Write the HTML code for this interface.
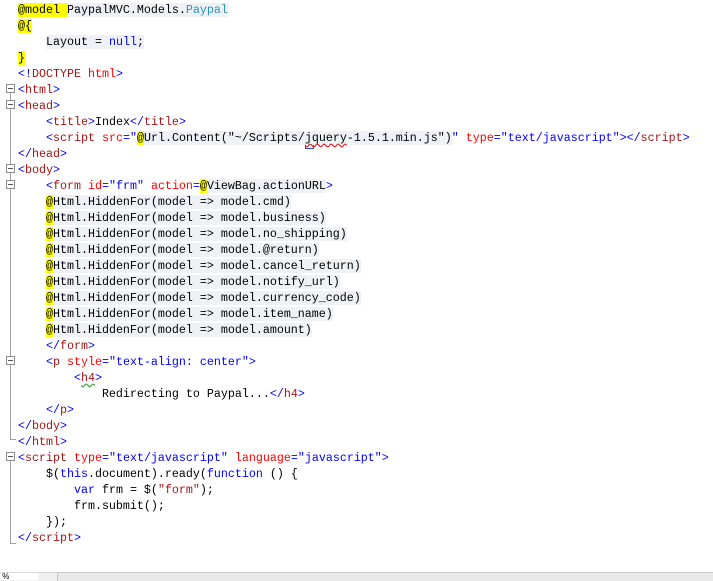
<!DOCTYPE html>
<html><head><style>
body{margin:0;width:713px;height:580px;background:#fff;overflow:hidden;position:relative;font-family:"Liberation Mono",monospace;font-size:11.67px}
.l{position:absolute;left:18px;height:16px;line-height:16px;white-space:pre;color:#000}
.t{color:#0000ff}.n{color:#a31515}.a{color:#ff0000}.v{color:#0000ff}.k{color:#0000ff}.c{color:#2b91af}
.y{background:#ffff00}.g{background:#eef2f7}
.box{position:absolute;left:6px;width:7px;height:7px;border:1px solid #8c8c8c;background:#fff}
.box:after{content:"";position:absolute;left:1px;top:3px;width:5px;height:1px;background:#555}
.vl{position:absolute;left:10px;width:1px;background:#a0a0a0}
.sq{text-decoration:underline wavy #e02020;text-underline-offset:2px}
.sqg{text-decoration:underline wavy #40a040;text-underline-offset:2px}
</style></head><body>
<div class="vl" style="top:90px;height:350px"></div>
<div class="vl" style="top:458px;height:86px"></div>
<div style="position:absolute;left:10px;top:543px;width:6px;height:1px;background:#a0a0a0"></div>
<div style="position:absolute;left:10px;top:439px;width:6px;height:1px;background:#a0a0a0"></div>
<div class="box" style="top:84px"></div>
<div class="box" style="top:100px"></div>
<div class="box" style="top:164px"></div>
<div class="box" style="top:180px"></div>
<div class="box" style="top:356px"></div>
<div class="box" style="top:452px"></div>

<div class="l" style="top:2px"><span class="y">@model </span><span class="g">PaypalMVC.Models.<span class="c">Paypal</span></span></div>
<div class="l" style="top:18px"><span class="y">@{</span></div>
<div class="l" style="top:34px">    <span class="g">Layout = <span class="k">null</span>;</span></div>
<div class="l" style="top:50px"><span class="y">}</span></div>
<div class="l" style="top:66px"><span class="t">&lt;!</span><span class="n">DOCTYPE</span> <span class="a">html</span><span class="t">&gt;</span></div>
<div class="l" style="top:82px"><span class="t">&lt;</span><span class="n">html</span><span class="t">&gt;</span></div>
<div class="l" style="top:98px"><span class="t">&lt;</span><span class="n">head</span><span class="t">&gt;</span></div>
<div class="l" style="top:114px">    <span class="t">&lt;</span><span class="n">title</span><span class="t">&gt;</span>Index<span class="t">&lt;/</span><span class="n">title</span><span class="t">&gt;</span></div>
<div class="l" style="top:130px">    <span class="t">&lt;</span><span class="n">script</span> <span class="a">src</span><span class="t">="</span><span class="y">@</span><span class="g">Url.Content("~/Scripts/<span class="sq">jquery</span>-1.5.1.min.js")</span><span class="t">"</span> <span class="a">type</span><span class="t">="text/javascript"&gt;&lt;/</span><span class="n">script</span><span class="t">&gt;</span></div>
<div style="position:absolute;left:305px;top:145px;width:7px;height:3px;border:1px solid #3050c0;border-top:none"></div>
<div class="l" style="top:146px"><span class="t">&lt;/</span><span class="n">head</span><span class="t">&gt;</span></div>
<div class="l" style="top:162px"><span class="t">&lt;</span><span class="n">body</span><span class="t">&gt;</span></div>
<div class="l" style="top:178px">    <span class="t">&lt;</span><span class="n">form</span> <span class="a">id</span><span class="t">="frm"</span> <span class="a">action</span><span class="t">=</span><span class="y">@</span><span class="g">ViewBag.actionURL</span><span class="t">&gt;</span></div>
<div class="l" style="top:194px">    <span class="y">@</span><span class="g">Html.HiddenFor(model =&gt; model.cmd)</span></div>
<div class="l" style="top:210px">    <span class="y">@</span><span class="g">Html.HiddenFor(model =&gt; model.business)</span></div>
<div class="l" style="top:226px">    <span class="y">@</span><span class="g">Html.HiddenFor(model =&gt; model.no_shipping)</span></div>
<div class="l" style="top:242px">    <span class="y">@</span><span class="g">Html.HiddenFor(model =&gt; model.@return)</span></div>
<div class="l" style="top:258px">    <span class="y">@</span><span class="g">Html.HiddenFor(model =&gt; model.cancel_return)</span></div>
<div class="l" style="top:274px">    <span class="y">@</span><span class="g">Html.HiddenFor(model =&gt; model.notify_url)</span></div>
<div class="l" style="top:290px">    <span class="y">@</span><span class="g">Html.HiddenFor(model =&gt; model.currency_code)</span></div>
<div class="l" style="top:306px">    <span class="y">@</span><span class="g">Html.HiddenFor(model =&gt; model.item_name)</span></div>
<div class="l" style="top:322px">    <span class="y">@</span><span class="g">Html.HiddenFor(model =&gt; model.amount)</span></div>
<div class="l" style="top:338px">    <span class="t">&lt;/</span><span class="n">form</span><span class="t">&gt;</span></div>
<div class="l" style="top:354px">    <span class="t">&lt;</span><span class="n">p</span> <span class="a">style</span><span class="t">="text-align: center"&gt;</span></div>
<div class="l" style="top:370px">        <span class="t">&lt;</span><span class="n sqg">h4</span><span class="t">&gt;</span></div>
<div class="l" style="top:386px">            Redirecting to Paypal...<span class="t">&lt;/</span><span class="n">h4</span><span class="t">&gt;</span></div>
<div class="l" style="top:402px">    <span class="t">&lt;/</span><span class="n">p</span><span class="t">&gt;</span></div>
<div class="l" style="top:418px"><span class="t">&lt;/</span><span class="n">body</span><span class="t">&gt;</span></div>
<div class="l" style="top:434px"><span class="t">&lt;/</span><span class="n">html</span><span class="t">&gt;</span></div>
<div class="l" style="top:450px"><span class="t">&lt;</span><span class="n">script</span> <span class="a">type</span><span class="t">="text/javascript"</span> <span class="a">language</span><span class="t">="javascript"&gt;</span></div>
<div class="l" style="top:466px">    $(<span class="k">this</span>.document).ready(<span class="k">function</span> () {</div>
<div class="l" style="top:482px">        <span class="k">var</span> frm = $(<span class="n">"form"</span>);</div>
<div class="l" style="top:498px">        frm.submit();</div>
<div class="l" style="top:514px">    });</div>
<div class="l" style="top:530px"><span class="t">&lt;/</span><span class="n">script</span><span class="t">&gt;</span></div>

<div style="position:absolute;left:0;top:572px;width:713px;height:8px;background:#f0f0f0;border-top:1px solid #d8d8d8"></div>
<div style="position:absolute;left:0;top:573px;width:38px;height:7px;background:#fff;font-size:8px;line-height:8px;font-family:'Liberation Sans',sans-serif;overflow:hidden">&nbsp;%</div>
<div style="position:absolute;left:57px;top:572px;width:656px;height:8px;background:#e8e8e8;border-top:1px solid #c8c8c8;border-left:1px solid #c8c8c8"></div>
</body></html>
